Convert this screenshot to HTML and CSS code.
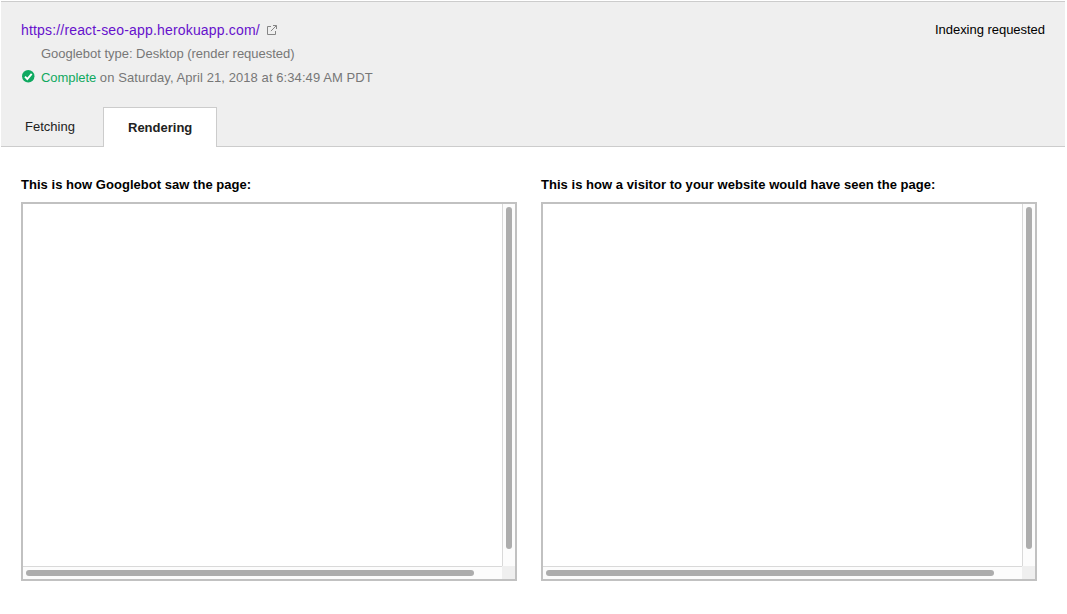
FILE: index.html
```html
<!DOCTYPE html>
<html lang="en">
<head>
<meta charset="utf-8">
<title>Fetch as Google</title>
<link rel="stylesheet" href="styles.css">
</head>
<body>
<main class="page">
  <header class="header">
    <div class="summary">
      <div class="details">
        <div class="url-row">
          <a class="url" href="#">https://react-seo-app.herokuapp.com/</a>
          <svg class="external" width="10" height="10" viewBox="0 0 10 10" fill="none" stroke="#858585"><path d="M4 1.5H.5v8h8V6M6 .5h3.5V4M9.3.7 3.9 6.1"/></svg>
        </div>
        <div class="type">Googlebot type: Desktop (render requested)</div>
        <div class="status">
          <svg class="check" width="13" height="13" viewBox="0 0 13 13"><circle cx="6.25" cy="6.25" r="6.2" fill="#0fa960"/><path d="M3 6.6 5.3 9l4.4-5.2" fill="none" stroke="#fff" stroke-width="1.9"/></svg>
          <span><span class="complete">Complete</span> on Saturday, April 21, 2018 at 6:34:49 AM PDT</span>
        </div>
      </div>
      <div class="indexing">Indexing requested</div>
    </div>
    <nav class="tabs">
      <a class="tab" href="#">Fetching</a>
      <a class="tab tab-active" href="#">Rendering</a>
    </nav>
  </header>
  <div class="previews">
    <section class="preview">
      <h2 class="title">This is how Googlebot saw the page:</h2>
      <div class="frame">
        <div class="canvas"></div>
        <div class="track-v"><div class="thumb-v"></div></div>
        <div class="track-h"><div class="thumb-h"></div></div>
        <div class="corner"></div>
      </div>
    </section>
    <section class="preview">
      <h2 class="title">This is how a visitor to your website would have seen the page:</h2>
      <div class="frame">
        <div class="canvas"></div>
        <div class="track-v"><div class="thumb-v"></div></div>
        <div class="track-h"><div class="thumb-h"></div></div>
        <div class="corner"></div>
      </div>
    </section>
  </div>
</main>
</body>
</html>
```
FILE: styles.css
```css
* { box-sizing: border-box; }
body {
  margin: 0;
  background: #fff;
  font: 13px/16px "Liberation Sans", Arial, sans-serif;
  color: #000;
}
a { text-decoration: none; color: inherit; }
svg { display: block; flex: none; }
.page { padding: 1px 2px 0 1px; }
.header {
  display: flex;
  flex-direction: column;
  justify-content: space-between;
  height: 146px;
  background: #efefef;
  border-top: 1px solid #ccc;
  border-bottom: 1px solid #ccc;
}
.summary {
  display: flex;
  justify-content: space-between;
  padding: 20px 20px 0;
}
.url-row { display: flex; align-items: center; height: 16px; }
.url { width: 239px; font-size: 14px; letter-spacing: 0.17px; color: #61c; white-space: nowrap; }
.external { margin-left: 7px; }
.type { margin: 8px 0 8px 20px; color: #777; letter-spacing: -0.02px; }
.status { display: flex; color: #777; letter-spacing: 0.08px; }
.check { margin: 0 6px 0 1px; }
.complete { color: #0fa960; letter-spacing: -0.06px; }
.indexing { letter-spacing: -0.03px; }
.tabs { display: flex; margin-bottom: -1px; }
.tab { width: 102px; padding: 12px 24px; color: #222; }
.tab-active {
  width: 114px;
  height: 40px;
  background: #fff;
  border: 1px solid #ccc;
  border-bottom: 0;
  font-weight: bold;
}
.previews { display: flex; gap: 24px; padding: 30px 20px 0; }
.preview { width: 496px; }
.title { margin: 0 0 9px; font-size: 13px; line-height: 16px; letter-spacing: 0.035px; white-space: nowrap; }
.frame {
  display: grid;
  grid-template: 1fr 13px / 1fr 13px;
  height: 379px;
  border: 2px solid #c1c1c1;
}
.track-v { background: #fcfcfc; border-left: 1px solid #d9d9d9; padding: 3px; }
.track-h { background: #fcfcfc; border-top: 1px solid #d9d9d9; padding: 3px; }
.thumb-v { width: 6px; height: 342px; border-radius: 3px; background: #adadad; }
.thumb-h { width: 448px; height: 6px; border-radius: 3px; background: #adadad; }
.corner { background: #efefef; }
```
